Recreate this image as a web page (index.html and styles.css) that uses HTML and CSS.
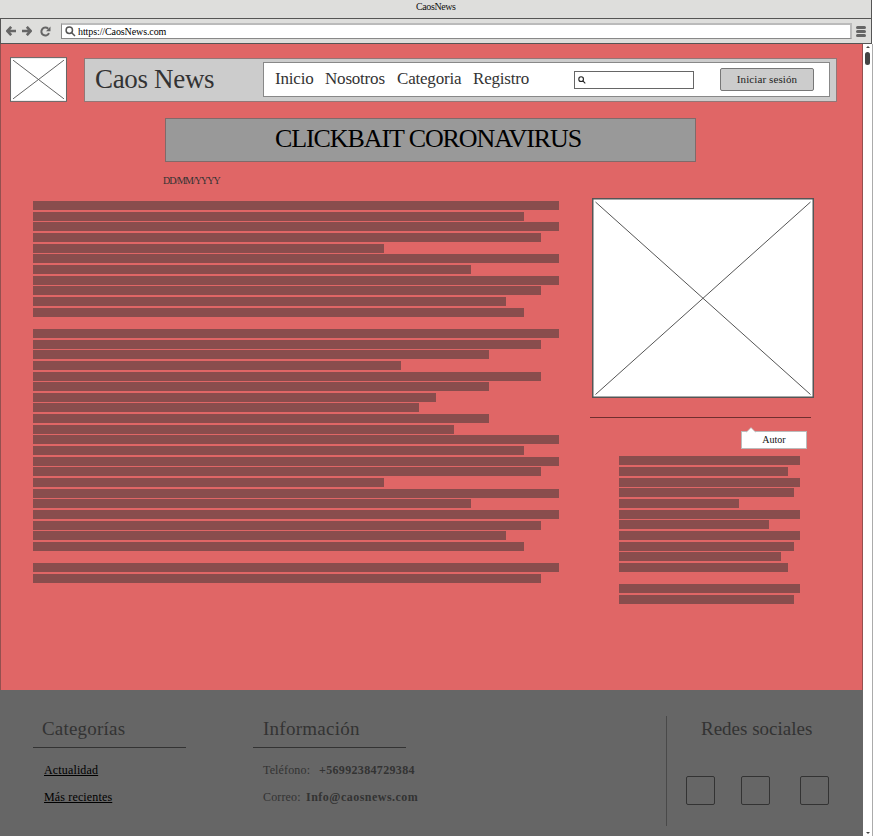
FILE: index.html
```html
<!DOCTYPE html>
<html lang="es">
<head>
<meta charset="utf-8">
<title>CaosNews</title>
<link rel="stylesheet" href="styles.css">
</head>
<body>
<div class="window">
  <div class="titlebar"><span>CaosNews</span></div>
  <div class="toolbar">
    <svg class="arrow" viewBox="0 0 10 10"><path d="M5.200 .8 1.400 5 5.200 9.200M1.6 5H10"/></svg>
    <svg class="arrow forward" viewBox="0 0 10 10"><path d="M4.800 .8 8.600 5 4.800 9.200M8.4 5H0"/></svg>
    <svg class="reload" viewBox="0 0 11 11"><path class="arc" d="M9 7.2A4 4 0 1 1 8.2 2.7"/><path class="tip" d="M10.5.6v4.6H6z"/></svg>
    <div class="address">
      <svg class="lens" viewBox="0 0 11 11"><circle cx="4.3" cy="4.3" r="3.2"/><path d="M6.7 6.7 10 10"/></svg>
      <span>https://CaosNews.com</span>
    </div>
    <div class="menu"><i></i><i></i><i></i></div>
  </div>
  <div class="viewport">
    <div class="page">
      <header class="header">
        <svg class="logo" viewBox="0 0 56 44"><rect x=".5" y=".5" width="55" height="43"/><path d="M3 3 53 41M53 3 3 41"/></svg>
        <div class="masthead">
          <h1>Caos News</h1>
          <nav class="nav">
            <a class="inicio">Inicio</a><a class="nosotros">Nosotros</a><a class="categoria">Categoria</a><a class="registro">Registro</a>
            <div class="search"><svg class="lens" viewBox="0 0 11 11"><circle cx="4.3" cy="4.3" r="3.2"/><path d="M6.7 6.7 10 10"/></svg></div>
            <button class="login">Iniciar sesión</button>
          </nav>
        </div>
      </header>
      <h2 class="headline"><span>CLICKBAIT CORONAVIRUS</span></h2>
      <div class="date">DD/MM/YYYY</div>
      <div class="content">
        <div class="bars article">
          <i class="n30"></i><i class="n28"></i><i class="n30"></i><i class="n29"></i><i class="n20"></i><i class="n30"></i><i class="n25"></i><i class="n30"></i><i class="n29"></i><i class="n27"></i><i class="n28"></i><i class="n0"></i>
          <i class="n30"></i><i class="n29"></i><i class="n26"></i><i class="n21"></i><i class="n29"></i><i class="n26"></i><i class="n23"></i><i class="n22"></i><i class="n26"></i><i class="n24"></i><i class="n30"></i><i class="n28"></i><i class="n30"></i><i class="n29"></i><i class="n20"></i><i class="n30"></i><i class="n25"></i><i class="n30"></i><i class="n29"></i><i class="n27"></i><i class="n28"></i><i class="n0"></i>
          <i class="n30"></i><i class="n29"></i>
        </div>
        <aside class="aside">
          <svg class="photo" viewBox="0 0 222 200"><rect x=".75" y=".75" width="220.5" height="198.5"/><path d="M3.500 4 218.500 196.500M218.500 4 3.500 196.500"/></svg>
          <div class="rule"></div>
          <div class="author"><svg class="notch" viewBox="0 0 10 6"><path d="M0 5.500 5 .5 10 5.500"/></svg><span>Autor</span></div>
          <div class="bars bio">
            <i class="n30"></i><i class="n28"></i><i class="n30"></i><i class="n29"></i><i class="n20"></i><i class="n30"></i><i class="n25"></i><i class="n30"></i><i class="n29"></i><i class="n27"></i><i class="n28"></i><i class="n0"></i>
            <i class="n30"></i><i class="n29"></i>
          </div>
        </aside>
      </div>
      <footer class="footer">
        <section class="column categories">
          <h3>Categorías</h3>
          <p><a class="actualidad">Actualidad</a></p>
          <p><a class="recientes">Más recientes</a></p>
        </section>
        <section class="column info">
          <h3>Información</h3>
          <p><span class="tel">Teléfono:</span><b class="number">+56992384729384</b></p>
          <p><span class="mail">Correo:</span><b class="email">Info@caosnews.com</b></p>
        </section>
        <section class="social">
          <h3>Redes sociales</h3>
          <div class="icons"><i></i><i></i><i></i></div>
        </section>
      </footer>
    </div>
    <div class="scrollbar"><b class="up"></b><b class="thumb"></b><b class="down"></b></div>
  </div>
</div>
</body>
</html>
```
FILE: styles.css
```css
* { box-sizing: border-box; }
body { margin: 0; font-family: "Liberation Serif", serif; color: #333; overflow: hidden; }
h1, h2, h3, p { margin: 0; font-weight: 400; }
svg { display: block; flex: none; fill: none; }
.window { width: 873px; height: 836px; background: #fff; display: flex; flex-direction: column; }

.titlebar { width: 872px; height: 19px; background: #dededc; border: solid #555; border-width: 0 1px 1px 0; padding: 1px 0 0 416px; font-size: 10px; line-height: 12px; letter-spacing: -.4px; color: #111; }
.toolbar { width: 872px; height: 25px; background: #dededc; border: solid #555; border-width: 0 1px 1px; display: flex; align-items: center; padding-left: 5px; }
.arrow { width: 10px; height: 10px; stroke: #666; stroke-width: 2.6; }
.forward { margin-left: 6px; }
.reload { width: 11px; height: 11px; margin-left: 8px; }
.reload .arc { stroke: #666; stroke-width: 2; }
.reload .tip { fill: #666; }
.address { width: 791px; height: 16px; margin-left: 10px; background: #fff; border: 1px solid #888; border-top: 2px solid #bbb; border-right: 2px solid #bbb; display: flex; align-items: center; font-size: 10px; letter-spacing: -.1px; color: #000; }
.lens { width: 11px; height: 11px; stroke: #555; stroke-width: 1.5; }
.address .lens { margin: 0 2px 0 3px; }
.menu { display: flex; flex-direction: column; gap: 1px; margin-left: 4px; }
.menu i { width: 10px; height: 3px; border-radius: 1.5px; background: #666; }

.viewport { flex: 1; display: flex; }
.page { width: 863px; height: 792px; background: #e06666; border: solid #94504f; border-width: 0 1px; display: flex; flex-direction: column; }
.header { display: flex; padding: 13px 0 0 9px; height: 74px; }
.logo { width: 57px; height: 45px; }
.logo rect, .photo rect { fill: #fff; stroke: #666; }
.logo path { stroke: #555; stroke-width: .9; }
.masthead { width: 753px; height: 44px; margin: 1px 0 0 17px; background: #ccc; border: 1px solid #937777; display: flex; }
h1 { width: 178px; padding-left: 10px; font-size: 27px; line-height: 41px; letter-spacing: -.33px; white-space: nowrap; }
.nav { width: 567px; height: 35px; margin-top: 3px; background: #fff; border: 1px solid #888; display: flex; align-items: center; padding-left: 11px; font-size: 17px; letter-spacing: -.2px; }
.nav a { white-space: nowrap; margin-top: -1px; }
.inicio { width: 50px; }
.nosotros { width: 72px; }
.categoria { width: 76px; }
.registro { width: 101px; }
.search { width: 120px; height: 18px; border: 1px solid #666; display: flex; align-items: center; padding-left: 3px; }
.search .lens { width: 8px; height: 8px; stroke: #222; }
.login { width: 94px; height: 23px; margin-left: 26px; padding: 0 0 2px; border: 1px solid #777; border-radius: 2px; background: #ccc; font: 11px "Liberation Serif", serif; letter-spacing: .1px; color: #222; white-space: nowrap; }
.headline { width: 531px; height: 44px; margin-left: 164px; background: #999; border: 1px solid #806a6a; color: #000; font-size: 26px; line-height: 40px; padding-left: 109px; white-space: nowrap; letter-spacing: -1.1px; }
.date { margin: 13px 0 0 162px; font-size: 10px; line-height: 12px; height: 23px; letter-spacing: -1px; }

.content { display: flex; }
.bars { display: flex; flex-direction: column; gap: 1.67px; }
.bars i { height: 9px; flex: none; background: #894d4d; }
.article { width: 526px; margin: 3px 0 0 32px; height: 383px; }
.aside { width: 222px; margin-left: 33px; }
.photo { width: 222px; height: 200px; }
.photo rect { stroke-width: 1.500; stroke: #555; }
.photo path { stroke: #555; }
.rule { width: 221px; height: 1px; background: #702f2f; margin: 19px 0 0 -2px; }
.author { position: relative; width: 66px; height: 18px; margin: 13px 0 0 149px; background: #fff; border: 1px solid #bbb; font-size: 10px; line-height: 16px; text-align: center; color: #111; }
.notch { position: absolute; left: 4px; top: -5px; width: 10px; height: 6px; }
.notch path { fill: #fff; stroke: #aaa; stroke-width: .7; }
.bio { width: 181px; margin: 7.300px 0 0 26.600px; }
.n30 { width: 100%; }
.n29 { width: 96.67%; }
.n28 { width: 93.33%; }
.n27 { width: 90%; }
.n26 { width: 86.67%; }
.n25 { width: 83.33%; }
.n24 { width: 80%; }
.n23 { width: 76.67%; }
.n22 { width: 73.33%; }
.n21 { width: 70%; }
.n20 { width: 66.67%; }
.n0 { width: 0; }

.footer { margin: auto -1px 0; height: 146px; background: #666; display: flex; padding: 26px 0 0 33px; }
h3 { font-size: 19px; line-height: 26px; white-space: nowrap; }
.column { width: 153px; }
.column h3 { height: 32px; border-bottom: 1px solid #333; padding-left: 9px; letter-spacing: .2px; }
.column p { font-size: 12px; line-height: 14px; white-space: nowrap; margin-top: 13px; padding-left: 11px; display: flex; letter-spacing: .15px; }
.column h3 + p { margin-top: 15px; }
.categories a { color: #000; text-decoration: underline; }
.info { margin-left: 67px; }
.info h3, .info p { padding-left: 10px; }
.tel { width: 56px; flex: none; }
.mail { width: 43px; flex: none; }
.number { letter-spacing: .33px; }
.email { letter-spacing: .48px; }
.info h3 { letter-spacing: .26px; }
.social { margin-left: 260px; width: 196px; height: 110px; border-left: 1px solid #494949; }
.social h3 { padding-left: 34px; }
.icons { display: flex; padding: 34px 0 0 19px; }
.icons i { width: 29px; height: 29px; border: 1px solid #333; border-radius: 2px; margin-right: 26px; }
.icons i:nth-child(2) { margin-right: 30px; }
.icons i:last-child { margin-right: 0; }

.scrollbar { width: 10px; background: #fff; border-right: 1px solid #ababab; display: flex; flex-direction: column; align-items: center; }
.up { border: 2px solid transparent; border-top: 0; border-bottom: 2px solid #444; margin-top: 2px; }
.thumb { width: 5px; height: 13px; border-radius: 2.500px; background: #444; margin-top: 4px; }
.down { border: 2px solid transparent; border-bottom: 0; border-top: 2px solid #444; margin: auto 0 2px; }
```
